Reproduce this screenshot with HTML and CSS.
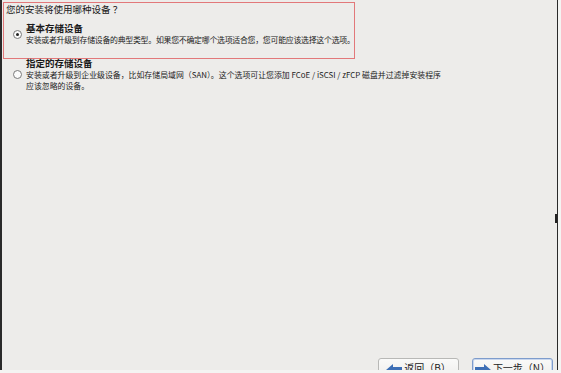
FILE: index.html
```html
<!DOCTYPE html>
<html lang="zh">
<head>
<meta charset="utf-8">
<link rel="stylesheet" href="styles.css">
</head>
<body>
<div class="screen">
  <div class="content">
    <div class="group">
      <div class="title">您的安装将使用哪种设备 ？</div>
      <div class="option">
        <span class="radio checked"></span>
        <div class="option-text">
          <div class="heading">基本存储设备</div>
          <div class="desc tight">安装或者升级到存储设备的典型类型。如果您不确定哪个选项适合您，您可能应该选择这个选项。</div>
        </div>
      </div>
    </div>
    <div class="option second">
      <span class="radio"></span>
      <div class="option-text">
        <div class="heading">指定的存储设备</div>
        <div class="desc">安装或者升级到企业级设备，比如存储局域网（SAN）。这个选项可让您添加 FCoE / iSCSI / zFCP 磁盘并过滤掉安装程序<br>应该忽略的设备。</div>
      </div>
    </div>
  </div>
  <div class="buttons">
    <button class="btn"><svg width="16" height="10" viewBox="0 0 16 10"><path d="M0 6 L7 0 L7 3 L16 3 L16 9 L0 9 Z" fill="#3d6fb6"/></svg>返回（B）</button>
    <button class="btn focus"><svg width="16" height="10" viewBox="0 0 16 10"><path d="M16 6 L9 0 L9 3 L0 3 L0 9 L16 9 Z" fill="#3d6fb6"/></svg>下一步（N）</button>
  </div>
  <span class="marker"></span>
</div>
</body>
</html>
```

FILE: styles.css
```css
html, body {
  margin: 0;
  padding: 0;
  background: #f4f4f2;
  overflow: hidden;
}
body {
  width: 561px;
  height: 373px;
  font-family: "Noto Sans CJK SC", "DejaVu Sans", sans-serif;
  color: #1a1a1a;
}
.screen {
  position: relative;
  box-sizing: border-box;
  width: 558px;
  height: 370px;
  background: #edecea;
  border-left: 2px solid #2a2a2a;
  border-right: 1px solid #2a2a2a;
  display: flex;
  flex-direction: column;
  overflow: hidden;
}
.content {
  flex: 1;
  padding: 2px 0 0 1px;
}
.group {
  box-sizing: border-box;
  width: 352px;
  height: 57px;
  border: 1px solid #e2787a;
  padding: 0 0 0 2px;
}
.title {
  font-size: 9.5px;
  line-height: 13px;
  white-space: nowrap;
}
.option {
  display: flex;
  align-items: flex-start;
  margin-top: 7px;
  padding-left: 7px;
}
.option.second {
  position: relative;
  margin-top: -1px;
  padding-left: 10px;
}
.radio {
  box-sizing: border-box;
  width: 9px;
  height: 9px;
  border: 1px solid #7a7a7a;
  border-radius: 50%;
  background: #fbfbfb;
  margin-top: 7px;
  margin-right: 4px;
  position: relative;
  flex: none;
}
.radio.checked::after {
  content: "";
  position: absolute;
  left: 2px;
  top: 2px;
  width: 3px;
  height: 3px;
  border-radius: 50%;
  background: #222;
}
.second .radio {
  margin-top: 12px;
}
.heading {
  font-size: 9.5px;
  font-weight: bold;
  line-height: 11px;
}
.desc {
  font-size: 7.9px;
  line-height: 10.5px;
  margin-top: 1px;
  color: #222;
  white-space: nowrap;
}
.desc.tight {
  letter-spacing: -0.25px;
}
.buttons {
  display: flex;
  justify-content: flex-end;
  gap: 13px;
  padding-right: 4px;
  height: 12px;
  flex: none;
}
.btn {
  box-sizing: border-box;
  width: 81px;
  height: 24px;
  border: 1px solid #b8b8b6;
  border-radius: 3px;
  background: linear-gradient(#fafaf9, #ecebe9);
  font-family: "Noto Sans CJK SC", "DejaVu Sans", sans-serif;
  font-size: 10px;
  color: #222;
  display: flex;
  align-items: flex-start;
  justify-content: center;
  gap: 2px;
  padding: 3px 0 0;
  line-height: 12px;
}
.btn svg {
  margin-top: 2px;
}
.btn.focus {
  border-color: #7e9ccc;
  box-shadow: inset 0 0 0 1px #c9d7ee;
}
.marker {
  position: absolute;
  right: 0;
  top: 214px;
  width: 2px;
  height: 9px;
  background: #222;
}
```
